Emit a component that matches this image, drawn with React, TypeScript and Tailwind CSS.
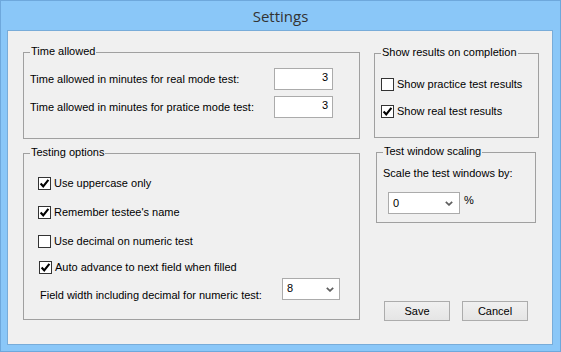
import React from "react";

function Check({ checked }: { checked: boolean }) {
  return (
    <span className="flex h-[13px] w-[13px] shrink-0 items-center justify-center border border-[#333333] bg-white">
      {checked && (
        <svg width="11" height="11" viewBox="0 0 11 11">
          <path d="M1.6 5.6 L4.2 8.3 L9.4 1.8" stroke="#000" strokeWidth="2.1" fill="none" />
        </svg>
      )}
    </span>
  );
}

function CheckRow({ checked, label, className }: { checked: boolean; label: string; className: string }) {
  return (
    <div className={className}>
      <div className="flex items-center gap-[3px] leading-[13px]">
        <Check checked={checked} />
        <span>{label}</span>
      </div>
    </div>
  );
}

function Group({ title, className, children }: { title: string; className: string; children?: React.ReactNode }) {
  return (
    <div className={className}>
      <span className="absolute -top-[8px] left-[6px] bg-[#f0f0f0] px-[1px] leading-[13px]">{title}</span>
      {children}
    </div>
  );
}

function Chevron() {
  return (
    <svg width="8" height="5" viewBox="0 0 8 5">
      <path d="M0.8 0.8 L4 3.9 L7.2 0.8" stroke="#5f5f5f" strokeWidth="1.7" fill="none" />
    </svg>
  );
}

function NumBox({ value }: { value: string }) {
  return (
    <div className="h-[22px] w-[59px] border border-[#ababab] bg-white pr-[4px] pt-[2px] text-right leading-[13px]">
      {value}
    </div>
  );
}

export default function App() {
  return (
    <div className="h-[352px] w-[561px] border border-[#6ea8dc] bg-[#8ac7f8] px-[6px] font-['Liberation_Sans',Arial,sans-serif] text-[11px] text-black">
      <div className="flex h-[29px] items-center justify-center pt-[1px] font-['Open_Sans',sans-serif] text-[15px] text-[#333333]">
        Settings
      </div>
      <div className="flex h-[315px] w-[546px] border border-[#78acd9] bg-[#f0f0f0] pl-[15px] pt-[21px]">
        {/* left column */}
        <div className="flex w-[337px] flex-col">
          <Group title="Time allowed" className="relative h-[87px] w-[337px] border border-[#a0a0a0] pl-[6px] pr-[26px] pt-[15px]">
            <div className="flex items-center justify-between">
              <span>Time allowed in minutes for real mode test:</span>
              <NumBox value="3" />
            </div>
            <div className="mt-[6px] flex items-center justify-between">
              <span>Time allowed in minutes for pratice mode test:</span>
              <NumBox value="3" />
            </div>
          </Group>
          <Group title="Testing options" className="relative mt-[14px] h-[167px] w-[337px] border border-[#a0a0a0] pl-[14px] pr-[19px]">
            <CheckRow checked label="Use uppercase only" className="mt-[23px]" />
            <CheckRow checked label="Remember testee's name" className="mt-[16px]" />
            <CheckRow checked={false} label="Use decimal on numeric test" className="mt-[16px]" />
            <CheckRow checked label="Auto advance to next field when filled" className="ml-[1px] mt-[13px]" />
            <div className="mt-[4px] flex items-start justify-between">
              <span className="ml-[2px] mt-[11px] leading-[13px]">Field width including decimal for numeric test:</span>
              <div className="flex h-[22px] w-[58px] items-start justify-between border border-[#ababab] bg-white pl-[4px] pr-[5px] pt-[3px] leading-[13px]">
                <span>8</span>
                <span className="mt-[5px]">
                  <Chevron />
                </span>
              </div>
            </div>
          </Group>
        </div>
        {/* right column */}
        <div className="ml-[14px] flex w-[165px] flex-col">
          <Group title="Show results on completion" className="relative mt-[1px] h-[85px] w-[165px] border border-[#a0a0a0] pl-[6px]">
            <CheckRow checked={false} label="Show practice test results" className="mt-[24px]" />
            <CheckRow checked label="Show real test results" className="mt-[14px]" />
          </Group>
          <Group title="Test window scaling" className="relative ml-[2px] mt-[14px] h-[71px] w-[160px] border border-[#a0a0a0] pl-[6px]">
            <div className="mt-[14px] leading-[13px]">Scale the test windows by:</div>
            <div className="ml-[5px] mt-[12px] flex items-start">
              <div className="flex h-[22px] w-[72px] items-center justify-between border border-[#ababab] bg-white pl-[4px] pr-[6px] leading-[13px]">
                <span>0</span>
                <Chevron />
              </div>
              <span className="ml-[4px] mt-[2px] leading-[13px]">%</span>
            </div>
          </Group>
          <div className="ml-[10px] mt-[78px] flex gap-[12px]">
            <button className="flex h-[20px] w-[66px] items-center justify-center border border-[#acacac] bg-linear-to-b from-[#f0f0f0] to-[#e5e5e5] leading-[13px]">
              Save
            </button>
            <button className="flex h-[20px] w-[66px] items-center justify-center border border-[#acacac] bg-linear-to-b from-[#f0f0f0] to-[#e5e5e5] leading-[13px]">
              Cancel
            </button>
          </div>
        </div>
      </div>
    </div>
  );
}
